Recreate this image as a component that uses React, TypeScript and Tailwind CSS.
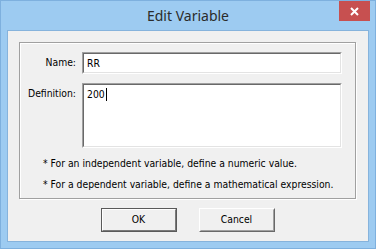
import React from "react";

const ui = { fontFamily: '"DejaVu Sans Condensed", "DejaVu Sans", "Liberation Sans", sans-serif' };

function Sunken({ className, children }: { className?: string; children?: React.ReactNode }) {
  return (
    <div className={"border border-t-[#a0a0a0] border-l-[#a0a0a0] border-b-white border-r-white " + (className ?? "")}>
      <div className="h-full border border-t-[#696969] border-l-[#696969] border-b-[#e3e3e3] border-r-[#e3e3e3] bg-white">
        {children}
      </div>
    </div>
  );
}

function Button({ label, def }: { label: string; def?: boolean }) {
  if (def) {
    return (
      <div className="w-[76px] h-[24px] border border-[#5a5a5a]">
        <div className="h-full border border-t-white border-l-white border-b-[#7a7a7a] border-r-[#7a7a7a] bg-[#f0f0f0] flex items-center justify-center text-[10.3px] text-black">
          {label}
        </div>
      </div>
    );
  }
  return (
    <div className="w-[76px] h-[24px] border border-t-white border-l-white border-b-[#696969] border-r-[#696969]">
      <div className="h-full border border-t-[#f0f0f0] border-l-[#f0f0f0] border-b-[#a0a0a0] border-r-[#a0a0a0] bg-[#f0f0f0] flex items-center justify-center text-[10.3px] text-black">
        {label}
      </div>
    </div>
  );
}

export default function App() {
  return (
    <div className="w-[376px] h-[249px] border border-[#7eb0de] bg-[#9dcbf1] flex flex-col" style={ui}>
      <div className="relative h-[29px] shrink-0 flex justify-center">
        <span className="pt-[5px] text-[14px] leading-[20px] text-[#2b2b2b]" style={{ fontFamily: '"Noto Sans", "Open Sans", sans-serif' }}>
          Edit Variable
        </span>
        <div className="absolute right-[5px] top-0 w-[31px] h-[20px] bg-[#c75050] flex items-center justify-center">
          <svg width="9" height="9" viewBox="0 0 9 9">
            <path d="M1 1 L8 8 M8 1 L1 8" stroke="white" strokeWidth="2" />
          </svg>
        </div>
      </div>
      <div className="flex-1 mx-[6px] mb-[6px] border border-[#86b3dc] bg-[#f0f0f0] flex flex-col pt-[11px] pl-[11px] pr-[11px]">
        <div className="h-[157px] mr-[1px] border border-[#a0a0a0] shadow-[inset_1px_1px_0_#fff,1px_1px_0_#fff] flex flex-col pt-[9px] text-[10.3px] text-black">
          <div className="flex items-center">
            <div className="w-[62px] pr-[6px] text-right whitespace-nowrap">Name:</div>
            <Sunken className="flex-1 mr-[13px] h-[22px]">
              <div className="pl-[3px] leading-[18px]">RR</div>
            </Sunken>
          </div>
          <div className="flex mt-[9px]">
            <div className="w-[62px] pr-[6px] text-right pt-[4px] leading-[13px] whitespace-nowrap">Definition:</div>
            <Sunken className="flex-1 mr-[13px] h-[65px]">
              <div className="pl-[3px] pt-[2px] leading-[14px] flex items-center">
                <span>200</span>
                <span className="inline-block w-[1px] h-[13px] bg-black ml-[1px]" />
              </div>
            </Sunken>
          </div>
          <div className="mt-[5px] pl-[23px] leading-[21px]">
            <div>* For an independent variable, define a numeric value.</div>
            <div>* For a dependent variable, define a mathematical expression.</div>
          </div>
        </div>
        <div className="mt-[9px] flex justify-center gap-[22px] pr-[1px]">
          <Button label="OK" def />
          <Button label="Cancel" />
        </div>
      </div>
    </div>
  );
}
